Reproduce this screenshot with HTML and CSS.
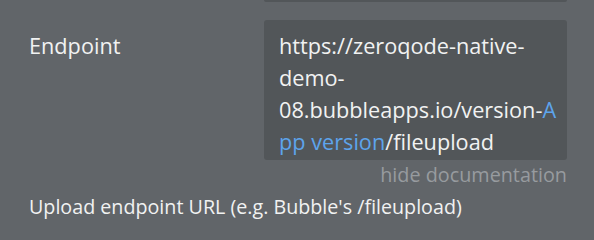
FILE: index.html
```html
<!DOCTYPE html>
<html>
<head>
<meta charset="utf-8">
<link rel="stylesheet" href="styles.css">
</head>
<body>
<div class="panel">
  <div class="prev-field"></div>
  <div class="row">
    <div class="label">Endpoint</div>
    <div class="value">https://zeroqode-native-<br>demo-<br>08.bubbleapps.io/version-<span class="dyn">A<br>pp version</span>/fileupload</div>
  </div>
  <div class="hide">hide documentation</div>
  <div class="doc">Upload endpoint URL (e.g. Bubble's /fileupload)</div>
</div>
</body>
</html>
```

FILE: styles.css
```css
html, body {
  margin: 0;
  padding: 0;
  background: #616569;
  height: 100%;
}
body {
  font-family: "Open Sans", "Noto Sans", sans-serif;
  color: #f1f2f2;
}
.panel {
  width: 538px;
  padding-left: 29px;
}
.prev-field {
  margin-left: 235px;
  width: 303px;
  height: 2px;
  background: #525659;
  border-radius: 0 0 3px 3px;
}
.row {
  display: flex;
  margin-top: 18px;
}
.label {
  width: 235px;
  flex: none;
  font-size: 21.7px;
  line-height: 32px;
  padding-top: 10px;
}
.value {
  width: 303px;
  box-sizing: border-box;
  background: #525659;
  border-radius: 3px;
  padding: 10px 8px 2px 15px;
  font-size: 21.7px;
  line-height: 32px;
  white-space: nowrap;
}
.dyn {
  color: #5da4ec;
}
.hide {
  text-align: right;
  font-size: 19.8px;
  line-height: 28px;
  margin-top: 1px;
  color: #979b9f;
}
.doc {
  font-size: 19.7px;
  line-height: 28px;
  margin-top: 4px;
}
```
